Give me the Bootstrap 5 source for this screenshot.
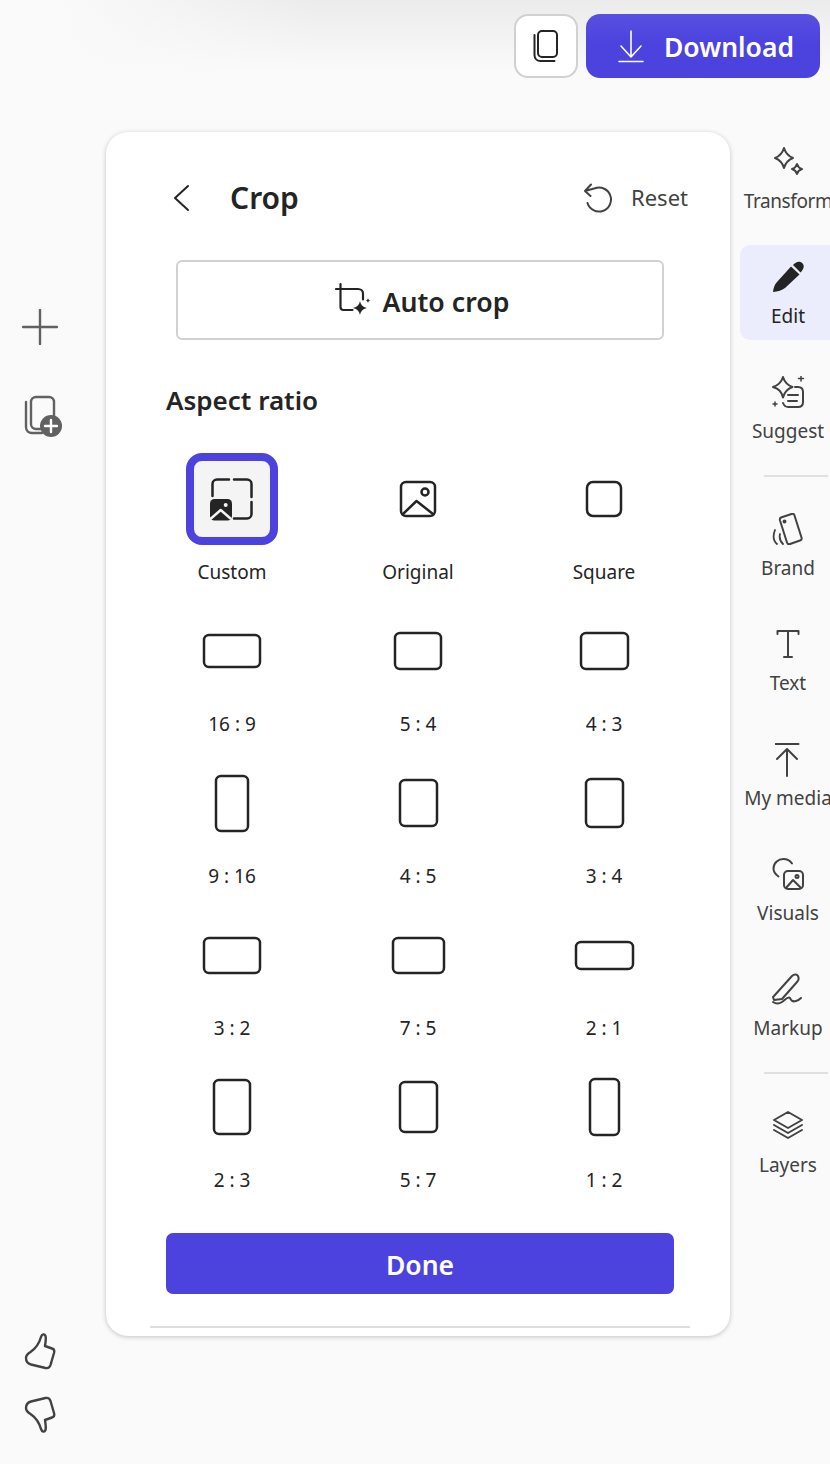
<!DOCTYPE html>
<html lang="en">
<head>
<meta charset="utf-8">
<title>Crop</title>
<link href="https://cdn.jsdelivr.net/npm/bootstrap@5.3.0/dist/css/bootstrap.min.css" rel="stylesheet">
<style>
html,body{height:1464px;overflow:hidden}
body{background:#fafafa;font-family:"Noto Sans",sans-serif;color:#242424}
svg{display:block;fill:none;stroke-linecap:round;stroke-linejoin:round}
.topbar{height:130px;padding:14px 10px 0 0;gap:8px;background:linear-gradient(to right,#fafafa 60px,rgba(250,250,250,0) 320px),linear-gradient(to bottom,#ebebeb,#fafafa 72px)}
.copy-btn{width:64px;height:64px;border:2px solid #d1d1d1;border-radius:14px;background:#fff}
.dl-btn{width:234px;height:64px;border:0;border-radius:14px;background:linear-gradient(to bottom,#5850df,#4c43df 45%);color:#fff;font-size:26.500px;font-weight:600;gap:20px;padding:0 0 0 6px}
.dl-text{padding-top:4px}
.left-rail{width:106px;height:1334px;padding:0 0 30px 0}
.left-slot{width:80px}
.tool-plus{margin-top:179px;height:36px}
.tool-pages{margin:50px 0 0 24px}
.thumbs{gap:26px}
.crop-card{width:624px;height:1204px;margin-top:2px;background:#fff;border-radius:22px;box-shadow:0 1px 5px rgba(0,0,0,.22);padding-top:46px}
.crop-head{height:40px;margin:0 42px 42px 66px}
.crop-title{font-size:30px;font-weight:600;margin:0 0 0 40px;line-height:40px;color:#242424}
.reset-lbl{font-size:22px;color:#424242;gap:18px;margin-left:auto}
.reset-text{margin-top:-2px}
.auto-btn{display:flex;width:488px;height:80px;margin-left:70px;border:2px solid #d1d1d1;border-radius:6px;background:#fff;font-size:26.700px;font-weight:600;color:#242424;gap:10px;padding:0 0 0 4px}
.auto-text{padding-top:4px}
.ratio-title{font-size:26px;font-weight:600;line-height:36px;margin:42px 0 35px 60px}
.ratio-grid{width:558px;margin-left:33px;row-gap:19px}
.ratio-box{height:92px;width:92px;margin:0 auto 13px}
.ratio-box.is-on{border:8px solid #4c43df;border-radius:16px;background:#f4f4f4}
.ratio-lbl{font-size:19px;line-height:28px;color:#242424}
.done-btn{display:block;width:508px;height:61px;margin:39px 0 32px 60px;padding:4px 0 0 0;background:#4c43df;color:#fff;border:0;border-radius:7px;font-size:26.500px;font-weight:600}
.card-rule{height:2px;margin:0 40px 0 44px;background:#dedede}
.right-rail{width:96px;margin-left:10px;gap:20px}
.rail-item{height:95px;width:96px;padding-top:16px;border-radius:10px 0 0 10px;color:#424242;font-size:19px;white-space:nowrap;overflow:hidden}
.rail-item.is-on{background:#ebedfc;color:#242424}
.rail-icon{height:32px;margin-bottom:9px}
.rail-text{line-height:28px}
.rail-tight{letter-spacing:-.4px}
.rail-rule{height:2px;width:64px;margin-left:24px;background:#e0e0e0}
</style>
</head>
<body>
<header class="topbar d-flex justify-content-end align-items-start">
  <button class="copy-btn d-flex align-items-center justify-content-center p-0" aria-label="Copy">
    <svg width="26" height="34" viewBox="0 0 26 34" stroke="#242424" stroke-width="2"><rect x="5" y="2" width="19" height="26" rx="4"/><path d="M1.500 6v20c0 3.500 2.500 6 6 6h14"/></svg>
  </button>
  <button class="dl-btn d-flex align-items-center justify-content-center">
    <svg width="26" height="34" viewBox="0 0 26 34" stroke="#fff" stroke-width="1.600"><path d="M13 2v26M3 17l10 11 10-11M1 32.500h24"/></svg>
    <span class="dl-text">Download</span>
  </button>
</header>
<main class="d-flex">
  <aside class="left-rail d-flex flex-column flex-shrink-0">
    <div class="tool-plus left-slot d-flex justify-content-center">
      <svg width="36" height="36" viewBox="0 0 36 36" stroke="#616161" stroke-width="2.400"><path d="M18 1v34M1 18h34"/></svg>
    </div>
    <div class="tool-pages">
      <svg width="40" height="42" viewBox="0 0 40 42">
        <g stroke="#616161" stroke-width="2.400"><rect x="7" y="2" width="23" height="32" rx="5"/><path d="M2 7v25c0 4 3 6 6 6h10"/></g>
        <circle cx="27" cy="31" r="11" fill="#616161"/><path d="M27 25v12M21 31h12" stroke="#fff" stroke-width="2.400"/>
      </svg>
    </div>
    <div class="thumbs left-slot mt-auto d-flex flex-column align-items-center">
      <svg width="32" height="38" viewBox="0 0 32 38" stroke="#424242" stroke-width="2.400"><path d="M17 5c1-3 3.500-3.500 4.500-1 .8 2.500 0 6-.5 10l7 2.500c2 .5 2.500 2.500 2 4.500L26.500 33c-.8 2.500-2.500 3.500-5 3L7 32.500c-3.500-1-5-3-5-6.500 0-2.500 2-4.500 4.500-6C11 17 15 12 17 5z"/></svg>
      <svg width="32" height="38" viewBox="0 0 32 38" stroke="#424242" stroke-width="2.400"><path transform="matrix(1 0 0 -1 0 38)" d="M17 5c1-3 3.500-3.500 4.500-1 .8 2.500 0 6-.5 10l7 2.500c2 .5 2.500 2.500 2 4.500L26.500 33c-.8 2.500-2.500 3.500-5 3L7 32.500c-3.500-1-5-3-5-6.500 0-2.500 2-4.500 4.500-6C11 17 15 12 17 5z"/></svg>
    </div>
  </aside>

  <section class="crop-card flex-shrink-0">
    <div class="crop-head d-flex align-items-center">
      <svg width="18" height="28" viewBox="0 0 18 28" stroke="#242424" stroke-width="2"><path d="M16 2 3 14l13 12"/></svg>
      <h1 class="crop-title">Crop</h1>
      <div class="reset-lbl d-flex align-items-center">
        <svg width="30" height="30" viewBox="0 0 30 30" stroke="#424242" stroke-width="2"><path d="M2 8l10-2.800A12 12 0 1 1 4.500 20M8 1.500 2 8l5.500 5"/></svg>
        <span class="reset-text">Reset</span>
      </div>
    </div>
    <button class="auto-btn align-items-center justify-content-center">
      <svg width="38" height="36" viewBox="0 0 38 36"><path d="M5.500 2v23c0 2 1 3 3 3h9M1 7h22c3 0 5 2 5 4.500v6" stroke="#242424" stroke-width="2.200"/><path d="M25 19c.8 3.500 2.500 6 7 7-4.500 1-6.200 3.500-7 7-.8-3.500-2.500-6-7-7 4.500-1 6.200-3.500 7-7z" fill="#242424"/><path d="M33 16c.3 1.500 1 2.200 2.500 2.500-1.500.3-2.200 1-2.500 2.500-.3-1.500-1-2.200-2.500-2.500 1.500-.3 2.200-1 2.500-2.500z" fill="#242424"/></svg>
      <span class="auto-text">Auto crop</span>
    </button>
    <h2 class="ratio-title">Aspect ratio</h2>
    <div class="row g-0 ratio-grid text-center">
      <div class="col-4">
        <div class="ratio-box is-on d-flex align-items-center justify-content-center">
          <svg width="44" height="44" viewBox="0 0 44 44">
            <path d="M2.500 19V7c0-2.500 2-4.500 4.500-4.500h12M24 2.500h13c2.500 0 4.500 2 4.500 4.500v13M41.500 25v12c0 2.500-2 4.500-4.500 4.500H24" stroke="#242424" stroke-width="2.500"/>
            <rect x="0" y="22" width="22" height="21.500" rx="4.500" fill="#242424"/><circle cx="15.700" cy="28" r="2" fill="#f4f4f4"/><path d="M1 41.500 10.700 33l9.800 8.500" stroke="#f4f4f4" stroke-width="2.400"/>
          </svg>
        </div>
        <div class="ratio-lbl">Custom</div>
      </div>
      <div class="col-4">
        <div class="ratio-box d-flex align-items-center justify-content-center">
          <svg width="38" height="38" viewBox="0 0 38 38" stroke="#242424" stroke-width="2.500"><rect x="2" y="2" width="34" height="34" rx="5"/><circle cx="26" cy="12" r="3.500"/><path d="M4 34 17.500 21 34 34"/></svg>
        </div>
        <div class="ratio-lbl">Original</div>
      </div>
      <div class="col-4">
        <div class="ratio-box d-flex align-items-center justify-content-center">
          <svg width="38" height="38" stroke="#242424" stroke-width="2.500"><rect x="2" y="2" width="34" height="34" rx="6"/></svg>
        </div>
        <div class="ratio-lbl">Square</div>
      </div>
      <div class="col-4"><div class="ratio-box d-flex align-items-center justify-content-center"><svg width="60" height="36" stroke="#242424" stroke-width="2.500"><rect x="2" y="2" width="56" height="32" rx="5"/></svg></div><div class="ratio-lbl">16 : 9</div></div>
      <div class="col-4"><div class="ratio-box d-flex align-items-center justify-content-center"><svg width="50" height="40" stroke="#242424" stroke-width="2.500"><rect x="2" y="2" width="46" height="36" rx="5"/></svg></div><div class="ratio-lbl">5 : 4</div></div>
      <div class="col-4"><div class="ratio-box d-flex align-items-center justify-content-center"><svg width="51" height="40" stroke="#242424" stroke-width="2.500"><rect x="2" y="2" width="47" height="36" rx="5"/></svg></div><div class="ratio-lbl">4 : 3</div></div>
      <div class="col-4"><div class="ratio-box d-flex align-items-center justify-content-center"><svg width="36" height="59" stroke="#242424" stroke-width="2.500"><rect x="2" y="2" width="32" height="55" rx="5"/></svg></div><div class="ratio-lbl">9 : 16</div></div>
      <div class="col-4"><div class="ratio-box d-flex align-items-center justify-content-center"><svg width="41" height="50" stroke="#242424" stroke-width="2.500"><rect x="2" y="2" width="37" height="46" rx="5"/></svg></div><div class="ratio-lbl">4 : 5</div></div>
      <div class="col-4"><div class="ratio-box d-flex align-items-center justify-content-center"><svg width="41" height="52" stroke="#242424" stroke-width="2.500"><rect x="2" y="2" width="37" height="48" rx="5"/></svg></div><div class="ratio-lbl">3 : 4</div></div>
      <div class="col-4"><div class="ratio-box d-flex align-items-center justify-content-center"><svg width="60" height="39" stroke="#242424" stroke-width="2.500"><rect x="2" y="2" width="56" height="35" rx="5"/></svg></div><div class="ratio-lbl">3 : 2</div></div>
      <div class="col-4"><div class="ratio-box d-flex align-items-center justify-content-center"><svg width="55" height="39" stroke="#242424" stroke-width="2.500"><rect x="2" y="2" width="51" height="35" rx="5"/></svg></div><div class="ratio-lbl">7 : 5</div></div>
      <div class="col-4"><div class="ratio-box d-flex align-items-center justify-content-center"><svg width="61" height="31" stroke="#242424" stroke-width="2.500"><rect x="2" y="2" width="57" height="27" rx="5"/></svg></div><div class="ratio-lbl">2 : 1</div></div>
      <div class="col-4"><div class="ratio-box d-flex align-items-center justify-content-center"><svg width="40" height="58" stroke="#242424" stroke-width="2.500"><rect x="2" y="2" width="36" height="54" rx="5"/></svg></div><div class="ratio-lbl">2 : 3</div></div>
      <div class="col-4"><div class="ratio-box d-flex align-items-center justify-content-center"><svg width="41" height="54" stroke="#242424" stroke-width="2.500"><rect x="2" y="2" width="37" height="50" rx="5"/></svg></div><div class="ratio-lbl">5 : 7</div></div>
      <div class="col-4"><div class="ratio-box d-flex align-items-center justify-content-center"><svg width="33" height="60" stroke="#242424" stroke-width="2.500"><rect x="2" y="2" width="29" height="56" rx="5"/></svg></div><div class="ratio-lbl">1 : 2</div></div>
    </div>
    <button class="done-btn">Done</button>
    <div class="card-rule"></div>
  </section>

  <nav class="right-rail d-flex flex-column flex-shrink-0 text-center">
    <div class="rail-item">
      <div class="rail-icon d-flex justify-content-center"><svg width="32" height="32" viewBox="0 0 32 32" stroke="#424242" stroke-width="2"><path d="M12 2c1.500 5 4 8 9 10-5 2-7.500 4.500-9 10-1.500-5.500-4-8-9-10 5-2 7.500-5 9-10zM25 18c.9 2.800 2.300 4.300 5 5-2.700.7-4.100 2.200-5 5-.9-2.800-2.300-4.300-5-5 2.700-.7 4.100-2.200 5-5z"/></svg></div>
      <div class="rail-text rail-tight">Transform</div>
    </div>
    <div class="rail-item is-on">
      <div class="rail-icon d-flex justify-content-center"><svg width="33" height="32" viewBox="0 0 33 32"><path d="M1 31c.5-4 1.500-7.500 4-10L19 5.500l8.500 8L13 27c-3 2.500-7 3.500-12 4z" fill="#242424"/><path d="M21 4c2-2.500 5-4 7.500-3 3 1.500 4 4 2.500 7-.5 1-1 2-2.500 3.500z" fill="#242424"/></svg></div>
      <div class="rail-text">Edit</div>
    </div>
    <div class="rail-item">
      <div class="rail-icon d-flex justify-content-center"><svg width="34" height="32" viewBox="0 0 34 32" stroke="#424242" stroke-width="2"><path d="M12 1c1.500 5 4 8 9.500 10-5.500 2-8 4.500-9.500 10.500C10.500 15.500 8 13 2 11c6-2 8.500-5 10-10z"/><path d="M24 11h3c3 0 5 2 5 5v10c0 3-2 5-5 5H17c-2.500 0-4-1.500-5-4M17 19h10M17 25h9"/><path d="M30 0v5M27.500 2.500h5M4 26v4M2 28h4" stroke-width="1.500"/></svg></div>
      <div class="rail-text">Suggest</div>
    </div>
    <div class="rail-rule"></div>
    <div class="rail-item">
      <div class="rail-icon d-flex justify-content-center"><svg width="32" height="32" viewBox="0 0 32 32" stroke="#424242" stroke-width="2"><path d="M9 4.500 19.500 1c1.500-.5 2.500 0 3 1.500l7 22c.5 1.500 0 2.500-1.500 3L18 31c-1.500.5-2.500 0-3-1.500L8 7.500c-.4-1.500 0-2.500 1-3z"/><circle cx="12.500" cy="8.500" r="1" fill="#424242"/><path d="M3 17c-2 5-2.500 10 2 14M8 21c-1 4 0 7 3 10" stroke-width="1.800"/></svg></div>
      <div class="rail-text">Brand</div>
    </div>
    <div class="rail-item">
      <div class="rail-icon d-flex justify-content-center"><svg width="24" height="32" viewBox="0 0 24 32" stroke="#424242" stroke-width="2"><path d="M1.500 6V3h21v3M12 3v26M8 29h8"/></svg></div>
      <div class="rail-text">Text</div>
    </div>
    <div class="rail-item">
      <div class="rail-icon d-flex justify-content-center"><svg width="26" height="34" viewBox="1 0 26 34" stroke="#424242" stroke-width="2"><path d="M1.500 1h23M13 33V6M3 16 13 6l10 10"/></svg></div>
      <div class="rail-text">My media</div>
    </div>
    <div class="rail-item">
      <div class="rail-icon d-flex justify-content-center"><svg width="34" height="32" viewBox="0 0 34 32" stroke="#424242" stroke-width="2"><path d="M21 5.500C19 2.500 16 1 12.500 1 7 1 2.500 5 2.500 10.500c0 3.500 2 6 5 8"/><rect x="13" y="13" width="19" height="18" rx="4"/><circle cx="26" cy="18.500" r="1.500"/><path d="M15 30l7-8 8 8"/></svg></div>
      <div class="rail-text">Visuals</div>
    </div>
    <div class="rail-item">
      <div class="rail-icon d-flex justify-content-center"><svg width="34" height="32" viewBox="0 0 34 32" stroke="#424242" stroke-width="2"><path d="M3 23 21 3c2-2 5-2 6 0s1 4-1 6L11 26l-8 1-1-3z"/><path d="M2 29c3 2 6 2 9 0 3-2 6-6 8-4 1 3 3 4 6 3 2-.5 3-1 5-3"/></svg></div>
      <div class="rail-text">Markup</div>
    </div>
    <div class="rail-rule"></div>
    <div class="rail-item">
      <div class="rail-icon d-flex justify-content-center"><svg width="32" height="32" viewBox="0 0 32 32" stroke="#424242" stroke-width="2"><path d="M16 2 30 10 16 18 2 10zM2 15l14 8 14-8M2 20l14 8 14-8"/></svg></div>
      <div class="rail-text">Layers</div>
    </div>
  </nav>
</main>
</body>
</html>
